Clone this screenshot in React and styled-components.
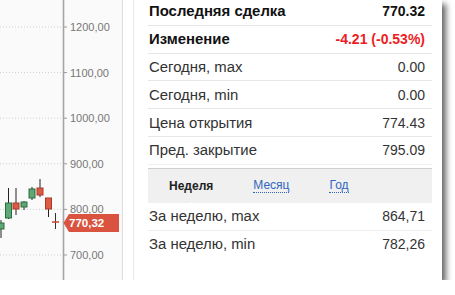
import React from "react";
import styled, { createGlobalStyle } from "styled-components";

const GlobalStyle = createGlobalStyle`
  html, body {
    margin: 0;
    padding: 0;
    background: #fff;
    font-family: "Liberation Sans", Arial, sans-serif;
  }
`;

const Frame = styled.div`
  width: 442px;
  height: 280px;
  display: flex;
  background: #fff;
  box-shadow: 4px 4px 6px rgba(0, 0, 0, 0.6);
  overflow: hidden;
`;

const ChartPanel = styled.div`
  width: 122px;
  flex-shrink: 0;
  background: #fafafa;
  border-right: 1px solid #dcdcdc;
`;

const Gutter = styled.div`
  width: 10px;
  flex-shrink: 0;
  border-right: 1px solid #e8e8e8;
`;

const Info = styled.div`
  flex: 1;
  padding: 0 10px 0 14px;
  margin-top: -2px;
`;

const Row = styled.div`
  display: flex;
  justify-content: space-between;
  align-items: center;
  box-sizing: border-box;
  height: 27.8px;
  padding: 0 7px 0 1px;
  border-bottom: 1px solid ${(p) => p.$line || "#e6e6e6"};
  font-size: 14px;
  color: #333;
  font-weight: ${(p) => (p.$bold ? "bold" : "normal")};
  ${(p) => p.$bold && "color: #111;"}
`;

const Label = styled.span`
  font-size: 14.9px;
`;

const Value = styled.span`
  color: ${(p) => (p.$red ? "#ee1c25" : "inherit")};
`;

const TabBar = styled.div`
  position: relative;
  display: flex;
  align-items: center;
  height: 35px;
  margin-top: 3px;
  box-sizing: border-box;
  background: #f0f0f0;
  border-top: 1px solid #cfcfcf;
  padding-left: 21px;
  gap: 40px;
  font-size: 12px;
`;

const Tab = styled.span`
  position: relative;
  color: ${(p) => (p.$active ? "#222" : "#2f67c0")};
  font-weight: ${(p) => (p.$active ? "bold" : "normal")};
  ${(p) => !p.$active && "border-bottom: 1px dotted #2f67c0; line-height: 13px;"}

  ${(p) =>
    p.$active &&
    `&::after {
      content: "";
      position: absolute;
      left: 50%;
      bottom: -14px;
      margin-left: -6px;
      border: 6px solid transparent;
      border-bottom: 5px solid #fff;
      border-top: 0;
    }`}
`;

const grid = [
  { y: 27, label: "1200,00" },
  { y: 72.6, label: "1100,00" },
  { y: 118.2, label: "1000,00" },
  { y: 163.8, label: "900,00" },
  { y: 209.4, label: "800,00" },
  { y: 255, label: "700,00" },
];

// x centre, body top/bottom, wick top/bottom, rising or falling
const candles = [
  { x: 1, o: 223, c: 229, hi: 220, lo: 238, up: true },
  { x: 8.5, o: 203, c: 218, hi: 188, lo: 219, up: true },
  { x: 16, o: 203, c: 209, hi: 188, lo: 215, up: false },
  { x: 24, o: 202, c: 207, hi: 201, lo: 210, up: true },
  { x: 32, o: 189, c: 198, hi: 187, lo: 200, up: true },
  { x: 40, o: 188, c: 195, hi: 179, lo: 197, up: false },
  { x: 48.5, o: 198, c: 209, hi: 198, lo: 217, up: false },
];

const Chart = () => (
  <svg width="122" height="280" viewBox="0 0 122 280">
    {grid.map((g) => (
      <g key={g.label}>
        <line x1="0" x2="63" y1={g.y} y2={g.y} stroke="#cfcfcf" strokeDasharray="1 2" />
        <line x1="63" x2="67" y1={g.y} y2={g.y} stroke="#999" />
        <text
          x="70"
          y={g.y + 4}
          fontSize="11"
          fill="#777"
          fontFamily="Liberation Sans, Arial, sans-serif"
        >
          {g.label}
        </text>
      </g>
    ))}
    <line x1="63.5" x2="63.5" y1="0" y2="280" stroke="#a5a5a5" strokeWidth="1.6" />
    {candles.map((c) => (
      <g key={c.x}>
        <line x1={c.x} x2={c.x} y1={c.hi} y2={c.lo} stroke="#222" />
        <rect
          x={c.x - 3}
          y={c.o}
          width="6"
          height={c.c - c.o}
          fill={c.up ? "#5fa875" : "#dd5a44"}
          stroke={c.up ? "#2e6b3e" : "#a83a28"}
          strokeWidth="1"
        />
      </g>
    ))}
    <line x1="55.5" x2="55.5" y1="213" y2="229" stroke="#333" />
    <line x1="52" x2="59" y1="222" y2="222" stroke="#c8452f" strokeWidth="1.5" />
    <path d="M63.5 223 L69 214 L119 214 L119 232 L69 232 Z" fill="#d9533f" />
    <text
      x="69"
      y="227"
      fontSize="11.5"
      fontWeight="bold"
      fill="#fff"
      fontFamily="Liberation Sans, Arial, sans-serif"
    >
      770,32
    </text>
  </svg>
);

const dayRows = [
  { label: "Последняя сделка", value: "770.32", bold: true },
  { label: "Изменение", value: "-4.21 (-0.53%)", bold: true, red: true },
  { label: "Сегодня, max", value: "0.00" },
  { label: "Сегодня, min", value: "0.00" },
  { label: "Цена открытия", value: "774.43" },
  { label: "Пред. закрытие", value: "795.09" },
];

const weekRows = [
  { label: "За неделю, max", value: "864,71" },
  { label: "За неделю, min", value: "782,26" },
];

export default function App() {
  return (
    <>
      <GlobalStyle />
      <Frame>
        <ChartPanel>
          <Chart />
        </ChartPanel>
        <Gutter />
        <Info>
          {dayRows.map((r, i) => (
            <Row
              key={r.label}
              $bold={r.bold}
              $line={i === dayRows.length - 1 ? "#f0f0f0" : undefined}
            >
              <Label>{r.label}</Label>
              <Value $red={r.red}>{r.value}</Value>
            </Row>
          ))}
          <TabBar>
            <Tab $active>Неделя</Tab>
            <Tab>Месяц</Tab>
            <Tab>Год</Tab>
          </TabBar>
          {weekRows.map((r, i) => (
            <Row
              key={r.label}
              $line={i === weekRows.length - 1 ? "transparent" : "#eeeeee"}
            >
              <Label>{r.label}</Label>
              <Value>{r.value}</Value>
            </Row>
          ))}
        </Info>
      </Frame>
    </>
  );
}
